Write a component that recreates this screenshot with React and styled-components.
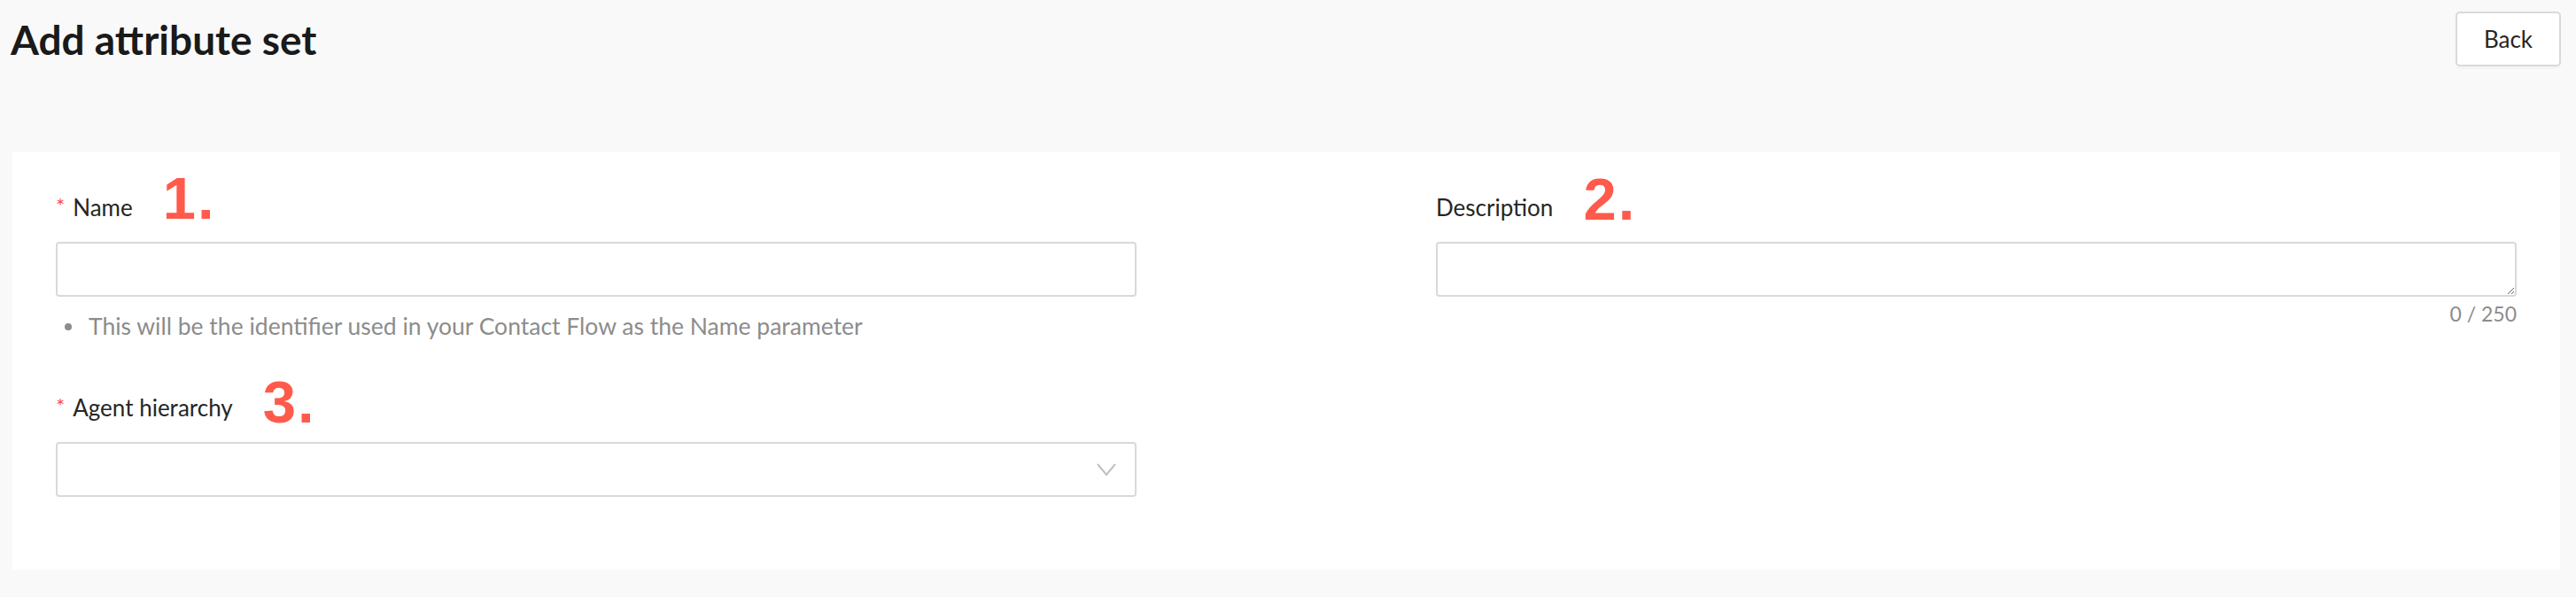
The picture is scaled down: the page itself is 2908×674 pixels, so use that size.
import React from "react";
import styled, { createGlobalStyle } from "styled-components";

const GlobalStyle = createGlobalStyle`
  body {
    margin: 0;
    background: #f9f9f9;
    font-family: Lato, "Open Sans", sans-serif;
  }
`;

const Page = styled.div`
  padding: 0 18px 0 14px;
`;

const Header = styled.div`
  display: flex;
  justify-content: space-between;
  align-items: flex-start;
  padding-top: 13px;
`;

const Title = styled.h1`
  margin: 4px 0 0 -2px;
  font-size: 46px;
  line-height: 55px;
  font-weight: 700;
  color: #1a1a1a;
`;

const BackButton = styled.button`
  width: 119px;
  height: 62px;
  margin-right: -1px;
  background: #fff;
  border: 2px solid #d9d9d9;
  border-radius: 5px;
  box-shadow: 0 3px 0 rgba(0, 0, 0, 0.02);
  font-family: Lato, sans-serif;
  font-size: 26px;
  color: #262626;
  cursor: pointer;
`;

const Card = styled.div`
  margin-top: 97px;
  background: #fff;
  padding: 40px 49px 82px;
  display: grid;
  grid-template-columns: 1220px 1220px;
  justify-content: space-between;
`;

const Column = styled.div`
  display: flex;
  flex-direction: column;
`;

const Field = styled.div`
  display: flex;
  flex-direction: column;
  margin-top: ${(props) => props.$offset || 0}px;
`;

const LabelRow = styled.div`
  display: flex;
  align-items: center;
  height: 44px;
  font-size: 26px;
  color: #262626;
`;

const Required = styled.span`
  color: #ff4d4f;
  font-size: 24px;
  margin-right: 9px;
  position: relative;
  top: -3px;
`;

const LabelText = styled.span`
  position: relative;
  line-height: 44px;
`;

// red step markers drawn over the form
const StepMark = styled.span`
  position: absolute;
  left: calc(100% + 34px);
  top: ${(props) => props.$top}px;
  font-family: "Liberation Sans", Arial, sans-serif;
  font-weight: 700;
  font-size: 67px;
  line-height: 67px;
  letter-spacing: 2px;
  color: #ff5a4b;
  white-space: nowrap;
`;

const TextInput = styled.input`
  box-sizing: border-box;
  margin-top: 17px;
  height: 62px;
  width: 100%;
  border: 2px solid #d9d9d9;
  border-radius: 4px;
  background: #fff;
  outline: none;
`;

const TextArea = styled.textarea`
  box-sizing: border-box;
  margin-top: 17px;
  height: 62px;
  width: 100%;
  border: 2px solid #d9d9d9;
  border-radius: 4px;
  background: #fff;
  outline: none;
  resize: vertical;
`;

const Counter = styled.div`
  margin-top: 3px;
  text-align: right;
  font-size: 23px;
  line-height: 32px;
  color: #8c8c8c;
`;

const Hint = styled.div`
  display: flex;
  align-items: center;
  margin-top: 11px;
  padding-left: 10px;
  height: 44px;
  font-size: 26.5px;
  color: #8c8c8c;

  &::before {
    content: "";
    width: 8px;
    height: 8px;
    margin: 2px 19px 0 0;
    border-radius: 50%;
    background: #8c8c8c;
  }
`;

const SelectBox = styled.div`
  box-sizing: border-box;
  margin-top: 17px;
  height: 62px;
  display: flex;
  align-items: center;
  justify-content: flex-end;
  padding-right: 21px;
  border: 2px solid #d9d9d9;
  border-radius: 4px;
  background: #fff;
`;

const Chevron = () => (
  <svg width="22" height="15" viewBox="0 0 22 15">
    <polyline points="1,1 11,13 21,1" fill="none" stroke="#bfbfbf" strokeWidth="2" />
  </svg>
);

const App = () => {
  return (
    <Page>
      <GlobalStyle />
      <Header>
        <Title>Add attribute set</Title>
        <BackButton>Back</BackButton>
      </Header>
      <Card>
        <Column>
          <Field>
            <LabelRow>
              <Required>*</Required>
              <LabelText>
                Name
                <StepMark $top={-22}>1.</StepMark>
              </LabelText>
            </LabelRow>
            <TextInput />
            <Hint>This will be the identifier used in your Contact Flow as the Name parameter</Hint>
          </Field>
          <Field $offset={48}>
            <LabelRow>
              <Required>*</Required>
              <LabelText>
                Agent hierarchy
                <StepMark $top={-18}>3.</StepMark>
              </LabelText>
            </LabelRow>
            <SelectBox>
              <Chevron />
            </SelectBox>
          </Field>
        </Column>
        <Column>
          <Field>
            <LabelRow>
              <LabelText>
                Description
                <StepMark $top={-21}>2.</StepMark>
              </LabelText>
            </LabelRow>
            <TextArea />
            <Counter>0 / 250</Counter>
          </Field>
        </Column>
      </Card>
    </Page>
  );
};

export default App;
